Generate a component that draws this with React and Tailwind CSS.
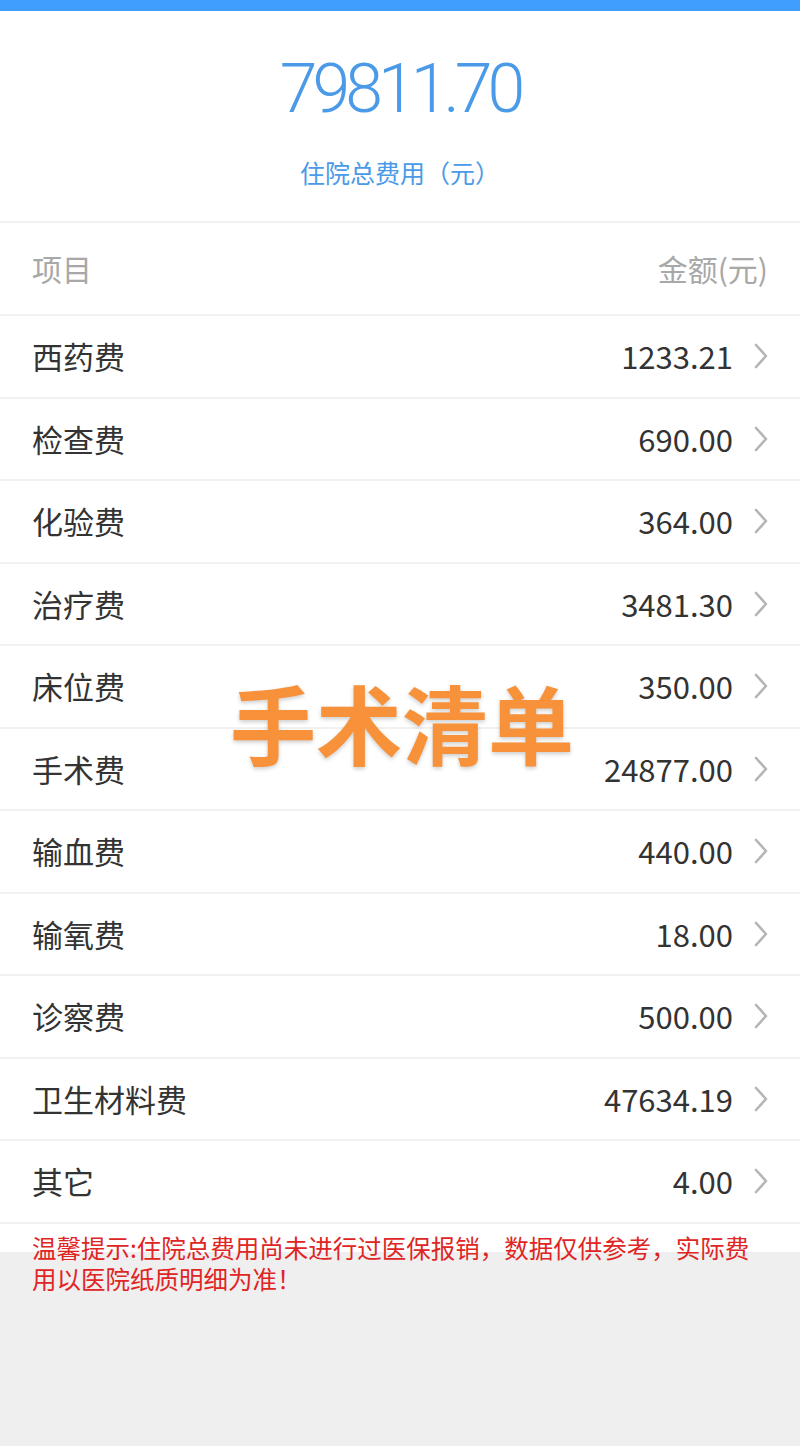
import React from 'react';

const items = [
  { name: '西药费', amount: '1233.21' },
  { name: '检查费', amount: '690.00' },
  { name: '化验费', amount: '364.00' },
  { name: '治疗费', amount: '3481.30' },
  { name: '床位费', amount: '350.00' },
  { name: '手术费', amount: '24877.00' },
  { name: '输血费', amount: '440.00' },
  { name: '输氧费', amount: '18.00' },
  { name: '诊察费', amount: '500.00' },
  { name: '卫生材料费', amount: '47634.19' },
  { name: '其它', amount: '4.00' },
];

function Chevron() {
  return (
    <svg width="16" height="28" viewBox="0 0 16 28" className="ml-[20px]">
      <path d="M3 3 L13 14 L3 25" fill="none" stroke="#b5b5b5" strokeWidth="2.6" strokeLinecap="round" strokeLinejoin="round" />
    </svg>
  );
}

export default function App() {
  return (
    <div className="relative min-h-[1446px] w-[800px] bg-[#efefef] font-['Noto_Sans_CJK_SC',sans-serif]">
      <div className="h-[11px] bg-[#409eff]" />

      {/* total */}
      <div className="flex flex-col items-center bg-white pt-[38px] pb-[32px]">
        <div className="font-['Roboto',sans-serif] text-[68px] font-light leading-[80px] tracking-[-5px] text-[#4a9ae8]">79811.70</div>
        <div className="mt-[26px] text-[25px] leading-[34px] text-[#4a9ae8]">住院总费用（元）</div>
      </div>

      {/* header */}
      <div className="flex h-[95px] items-center justify-between border-t-2 border-b-2 border-[#f1f1f1] bg-white px-[32px] text-[30px] text-[#a8a8a8]">
        <span>项目</span>
        <span>金额(元)</span>
      </div>

      {/* rows */}
      <div className="bg-white">
        {items.map((item) => (
          <div
            key={item.name}
            className="flex h-[82.5px] items-center justify-between border-b-2 border-[#f1f1f1] pl-[32px] pr-[31px] text-[31px] text-[#333333]"
          >
            <span>{item.name}</span>
            <span className="flex items-center">
              {item.amount}
              <Chevron />
            </span>
          </div>
        ))}
      </div>

      {/* notice */}
      <div className="bg-[linear-gradient(to_bottom,#ffffff_28px,#efefef_28px)] pl-[32px] pr-[48px] pt-[8px] text-[24.5px] leading-[31px] text-[#e02525]">
        温馨提示:住院总费用尚未进行过医保报销，数据仅供参考，实际费用以医院纸质明细为准！
      </div>

      {/* watermark */}
      <div className="absolute left-[230px] top-[672px] text-[86px] font-bold leading-[100px] text-[#f7923a] [text-shadow:0_2px_4px_rgba(0,0,0,0.2)]">
        手术清单
      </div>
    </div>
  );
}
